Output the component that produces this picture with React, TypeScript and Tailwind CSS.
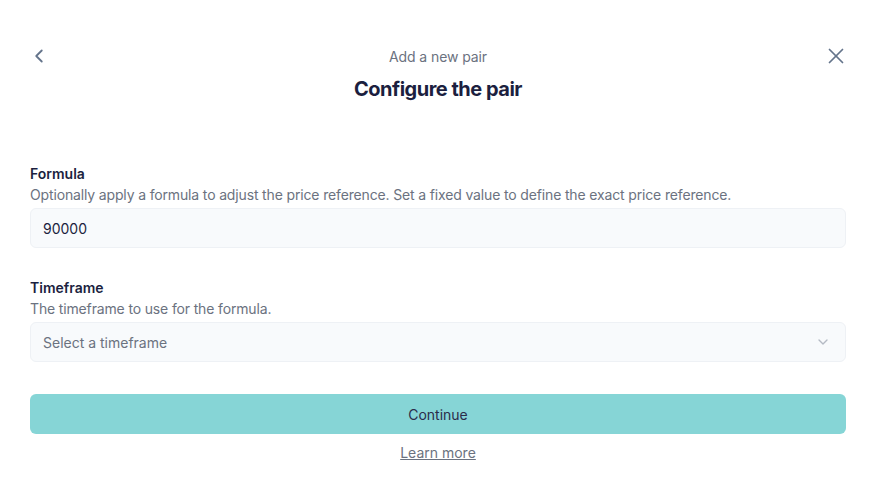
import React from "react";

export default function App() {
  return (
    <div className="w-[881px] h-[489px] bg-white pl-[30px] pr-[35px] pt-[40px]" style={{ fontFamily: "Inter, 'Noto Sans', sans-serif" }}>
      <div className="relative flex flex-col items-center">
        <button className="absolute left-[-2px] top-[5px] text-[#64748b]">
          <svg width="22" height="22" viewBox="0 0 24 24" fill="none" stroke="currentColor" strokeWidth="2" strokeLinecap="round" strokeLinejoin="round"><path d="m15 18-6-6 6-6" /></svg>
        </button>
        <button className="absolute right-[-3px] top-[3px] text-[#64748b]">
          <svg width="26" height="26" viewBox="0 0 24 24" fill="none" stroke="currentColor" strokeWidth="1.6" strokeLinecap="round" strokeLinejoin="round"><path d="M18 6 6 18" /><path d="m6 6 12 12" /></svg>
        </button>
        <div className="text-[14px] leading-[34px] text-[#6b7280] tracking-[-0.1px]">Add a new pair</div>
        <div className="mt-[1px] text-[20px] leading-[28px] font-bold text-[#1c1f3f] tracking-[-0.5px]">Configure the pair</div>
      </div>
      <div className="mt-[60px] flex flex-col">
        <div className="text-[14px] leading-[22px] font-semibold text-[#1c1f3f]">Formula</div>
        <div className="text-[14px] leading-[20px] text-[#6b7280] tracking-[-0.15px]">Optionally apply a formula to adjust the price reference. Set a fixed value to define the exact price reference.</div>
        <div className="mt-[3px] h-[40px] rounded-md border border-[#eef1f5] bg-[#f8fafc] px-[12px] flex items-center text-[14px] text-[#1c1f3f]">90000</div>
      </div>
      <div className="mt-[29px] flex flex-col">
        <div className="text-[14px] leading-[22px] font-semibold text-[#1c1f3f]">Timeframe</div>
        <div className="text-[14px] leading-[20px] text-[#6b7280] tracking-[-0.15px]">The timeframe to use for the formula.</div>
        <div className="mt-[3px] h-[40px] rounded-md border border-[#eef1f5] bg-[#f8fafc] pl-[12px] pr-[14px] flex items-center justify-between text-[14px] text-[#6b7280]">
          <span>Select a timeframe</span>
          <svg width="16" height="16" viewBox="0 0 24 24" fill="none" stroke="#b4bac4" strokeWidth="2" strokeLinecap="round" strokeLinejoin="round"><path d="m6 9 6 6 6-6" /></svg>
        </div>
      </div>
      <button className="mt-[32px] w-full h-[40px] rounded-md bg-[#86d5d6] text-[14px] text-[#2b2d4a]">Continue</button>
      <div className="mt-[8px] flex justify-center">
        <a className="text-[14px] text-[#6b7280] underline">Learn more</a>
      </div>
    </div>
  );
}
